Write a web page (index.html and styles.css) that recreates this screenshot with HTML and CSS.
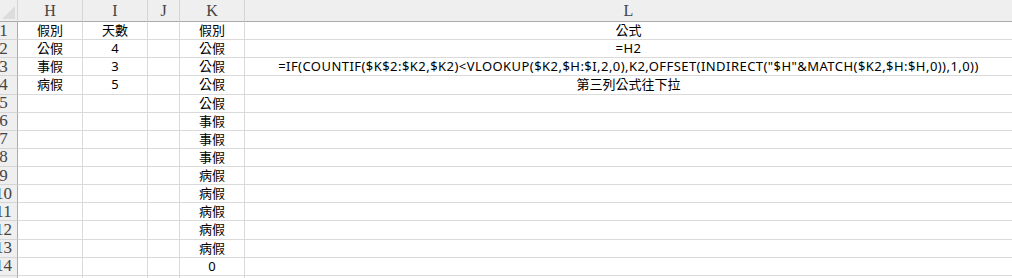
FILE: index.html
```html
<!DOCTYPE html>
<html lang="zh-Hant">
<head>
    <meta charset="UTF-8">
    <title>假別公式</title>
    <link rel="stylesheet" href="styles.css">
</head>
<body>

<div class="sheet">
    <!-- 欄標題 -->
    <div class="corner">
        <svg width="17" height="21" viewBox="0 0 17 21"><polygon points="15,6 15,19 2,19" fill="#dcdcdc"/></svg>
    </div>
    <div class="col-head">H</div>
    <div class="col-head">I</div>
    <div class="col-head">J</div>
    <div class="col-head">K</div>
    <div class="col-head">L</div>

    <div class="row-head"><span>1</span></div>
    <div class="cell">假別</div><div class="cell">天數</div><div class="cell"></div><div class="cell">假別</div><div class="cell">公式</div>

    <div class="row-head"><span>2</span></div>
    <div class="cell">公假</div><div class="cell">4</div><div class="cell"></div><div class="cell">公假</div><div class="cell latin">=H2</div>

    <div class="row-head"><span>3</span></div>
    <div class="cell">事假</div><div class="cell">3</div><div class="cell"></div><div class="cell">公假</div><div class="cell latin">=IF(COUNTIF($K$2:$K2,$K2)&lt;VLOOKUP($K2,$H:$I,2,0),K2,OFFSET(INDIRECT("$H"&amp;MATCH($K2,$H:$H,0)),1,0))</div>

    <div class="row-head"><span>4</span></div>
    <div class="cell">病假</div><div class="cell">5</div><div class="cell"></div><div class="cell">公假</div><div class="cell">第三列公式往下拉</div>

    <div class="row-head"><span>5</span></div>
    <div class="cell"></div><div class="cell"></div><div class="cell"></div><div class="cell">公假</div><div class="cell"></div>

    <div class="row-head"><span>6</span></div>
    <div class="cell"></div><div class="cell"></div><div class="cell"></div><div class="cell">事假</div><div class="cell"></div>

    <div class="row-head"><span>7</span></div>
    <div class="cell"></div><div class="cell"></div><div class="cell"></div><div class="cell">事假</div><div class="cell"></div>

    <div class="row-head"><span>8</span></div>
    <div class="cell"></div><div class="cell"></div><div class="cell"></div><div class="cell">事假</div><div class="cell"></div>

    <div class="row-head"><span>9</span></div>
    <div class="cell"></div><div class="cell"></div><div class="cell"></div><div class="cell">病假</div><div class="cell"></div>

    <div class="row-head"><span>10</span></div>
    <div class="cell"></div><div class="cell"></div><div class="cell"></div><div class="cell">病假</div><div class="cell"></div>

    <div class="row-head"><span>11</span></div>
    <div class="cell"></div><div class="cell"></div><div class="cell"></div><div class="cell">病假</div><div class="cell"></div>

    <div class="row-head"><span>12</span></div>
    <div class="cell"></div><div class="cell"></div><div class="cell"></div><div class="cell">病假</div><div class="cell"></div>

    <div class="row-head"><span>13</span></div>
    <div class="cell"></div><div class="cell"></div><div class="cell"></div><div class="cell">病假</div><div class="cell"></div>

    <div class="row-head"><span>14</span></div>
    <div class="cell"></div><div class="cell"></div><div class="cell"></div><div class="cell">0</div><div class="cell"></div>

    <div class="row-head"><span>15</span></div>
    <div class="cell"></div><div class="cell"></div><div class="cell"></div><div class="cell"></div><div class="cell"></div>
</div>

</body>
</html>
```

FILE: styles.css
```css
body {
    margin: 0;
    padding: 0;
    background-color: #fff;
    overflow: hidden;
}
.sheet {
    display: grid;
    grid-template-columns: 18px 65px 65px 32px 65px 768px;
    grid-template-rows: 22px repeat(15, 18.14px);
    font-family: "Noto Sans", "Noto Sans CJK TC", sans-serif;
    font-size: 13px;
    color: #000;
}
.corner {
    background-color: #efefef;
    border-right: 1px solid #d5d5d5;
    border-bottom: 1px solid #ababab;
    box-sizing: border-box;
    overflow: hidden;
}
.corner svg {
    display: block;
}
.col-head {
    background-color: #efefef;
    border-right: 1px solid #d5d5d5;
    border-bottom: 1px solid #ababab;
    box-sizing: border-box;
    display: flex;
    align-items: center;
    justify-content: center;
    font-family: "Liberation Serif", serif;
    font-size: 16px;
    color: #444;
    padding-top: 1px;
}
.row-head {
    background-color: #efefef;
    border-right: 1px solid #ababab;
    border-bottom: 1px solid #d5d5d5;
    box-sizing: border-box;
    overflow: hidden;
    display: flex;
    align-items: center;
}
.row-head span {
    flex: none;
    width: 26px;
    margin-left: -9.5px;
    text-align: center;
    font-family: "Liberation Serif", serif;
    font-size: 17px;
    color: #444;
}
.cell {
    border-right: 1px solid #dadada;
    border-bottom: 1px solid #dadada;
    box-sizing: border-box;
    display: flex;
    align-items: center;
    justify-content: center;
    white-space: nowrap;
    line-height: 1;
}
.latin {
    letter-spacing: 0.45px;
}
```
